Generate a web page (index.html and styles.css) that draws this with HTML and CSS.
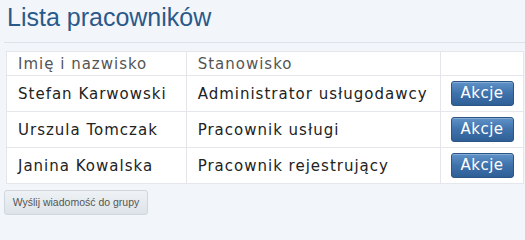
FILE: index.html
```html
<!DOCTYPE html>
<html lang="pl">
<head>
<meta charset="utf-8">
<title>Lista pracowników</title>
<link rel="stylesheet" href="styles.css">
</head>
<body>
<div class="page">
  <h1 class="title">Lista pracowników</h1>
  <div class="content">
    <table class="grid">
      <colgroup>
        <col class="c-name">
        <col class="c-role">
        <col class="c-act">
      </colgroup>
      <thead>
        <tr><th>Imię i nazwisko</th><th>Stanowisko</th><th></th></tr>
      </thead>
      <tbody>
        <tr><td>Stefan Karwowski</td><td>Administrator usługodawcy</td><td class="act"><button class="btn-blue">Akcje</button></td></tr>
        <tr><td>Urszula Tomczak</td><td>Pracownik usługi</td><td class="act"><button class="btn-blue">Akcje</button></td></tr>
        <tr><td>Janina Kowalska</td><td>Pracownik rejestrujący</td><td class="act"><button class="btn-blue">Akcje</button></td></tr>
      </tbody>
    </table>
    <button class="btn-grey">Wyślij wiadomość do grupy</button>
  </div>
</div>
</body>
</html>
```
FILE: styles.css
```css
html, body {
  margin: 0;
  padding: 0;
  background: #f2f5fa;
}
.page {
  width: 525px;
  height: 220px;
  overflow: hidden;
}
.title {
  margin: 0 0 0 4px;
  padding: 2px 0 0 3px;
  height: 43px;
  box-sizing: border-box;
  font-family: "Liberation Sans", Arial, sans-serif;
  font-size: 25px;
  line-height: 30px;
  font-weight: normal;
  color: #2a5a89;
  border-bottom: 1px solid #dce2ea;
}
.content {
  padding: 8px 1px 0 6px;
}
.grid {
  border-collapse: collapse;
  width: 518px;
  background: #fff;
  font-family: "DejaVu Sans", Verdana, sans-serif;
  font-size: 15px;
  letter-spacing: 1px;
  color: #222;
}
.c-name { width: 180px; }
.c-role { width: 255px; }
.c-act { width: 83px; }
.grid th, .grid td {
  border: 1px solid #e3e7ec;
  padding: 0 0 0 11px;
  text-align: left;
  vertical-align: middle;
}
.grid th {
  height: 23px;
  font-weight: normal;
  color: #555;
}
.grid td {
  height: 35px;
}
.grid td.act {
  padding: 0;
  text-align: center;
}
.btn-blue {
  width: 63px;
  height: 25px;
  padding: 0;
  border: 1px solid #2c5584;
  border-radius: 3px;
  background: linear-gradient(#5e92c8, #3f72ab 50%, #2f5f97);
  color: #fff;
  font-family: "DejaVu Sans", Verdana, sans-serif;
  font-size: 15px;
  letter-spacing: 0.5px;
  line-height: 23px;
  box-shadow: inset 0 1px 0 rgba(255,255,255,0.25);
}
.btn-grey {
  display: block;
  margin: 6px 0 0 -2px;
  width: 144px;
  height: 25px;
  padding: 0;
  border: 1px solid #cfd6dd;
  border-radius: 3px;
  background: linear-gradient(#eef2f5, #dde3e8);
  color: #555;
  font-family: "Liberation Sans", Arial, sans-serif;
  font-size: 10.5px;
  line-height: 23px;
}
```
